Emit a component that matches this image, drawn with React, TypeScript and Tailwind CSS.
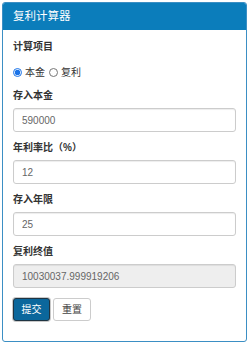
import React, { useState } from 'react';

const font = { fontFamily: '"Liberation Sans", "Noto Sans CJK SC", sans-serif' };

function Field({ label, value, disabled }: { label: string; value: string; disabled?: boolean }) {
  return (
    <div className="mb-2">
      <div className="h-4 leading-4 text-[10px] font-bold text-[#333] mb-1">{label}</div>
      <input
        readOnly
        value={value}
        disabled={disabled}
        className={`block w-full h-6 px-2 text-[10px] text-[#666] border border-[#ccc] rounded-[3px] shadow-[inset_0_1px_1px_rgba(0,0,0,0.075)] outline-none ${
          disabled ? 'bg-[#eee]' : 'bg-white'
        }`}
        style={font}
      />
    </div>
  );
}

export default function App() {
  const [mode, setMode] = useState<'principal' | 'compound'>('principal');

  return (
    <div className="w-[249px] h-[344px] bg-white pt-[2px] px-[2px]" style={font}>
      <div className="w-[245px] h-[340px] border border-[#3b8fc4] rounded-[3px] overflow-hidden">
        {/* Panel header */}
        <div className="h-[27px] bg-[#0b7dbb] flex items-center px-[10px]">
          <span className="text-[11.5px] text-white">复利计算器</span>
        </div>

        {/* Panel body */}
        <div className="px-[10px] pt-[9px]">
          <div className="h-4 leading-4 text-[10px] font-bold text-[#333]">计算项目</div>
          <div className="flex items-center h-4 mt-[9px] mb-2 text-[10px] text-[#333]">
            <label className="flex items-center">
              <input
                type="radio"
                name="mode"
                checked={mode === 'principal'}
                onChange={() => setMode('principal')}
                className="w-[9px] h-[9px] m-0 mr-[3px] accent-[#1a73e8]"
              />
              本金
            </label>
            <label className="flex items-center ml-[4px]">
              <input
                type="radio"
                name="mode"
                checked={mode === 'compound'}
                onChange={() => setMode('compound')}
                className="w-[9px] h-[9px] m-0 mr-[3px] accent-[#1a73e8]"
              />
              复利
            </label>
          </div>

          <Field label="存入本金" value="590000" />
          <Field label="年利率比（%）" value="12" />
          <Field label="存入年限" value="25" />
          <Field label="复利终值" value="10030037.999919206" disabled />

          <div className="flex gap-[3px] mt-[10px]">
            <button
              type="button"
              className="w-[37px] h-[23px] text-[10px] text-white bg-[#0b679c] border border-[#1f3442] rounded-[3px] shadow-[0_0_0_1px_rgba(120,120,120,0.4)]"
              style={font}
            >
              提交
            </button>
            <button
              type="button"
              className="w-[38px] h-[23px] text-[10px] text-[#444] bg-white border border-[#ccc] rounded-[3px]"
              style={font}
            >
              重置
            </button>
          </div>
        </div>
      </div>
    </div>
  );
}
